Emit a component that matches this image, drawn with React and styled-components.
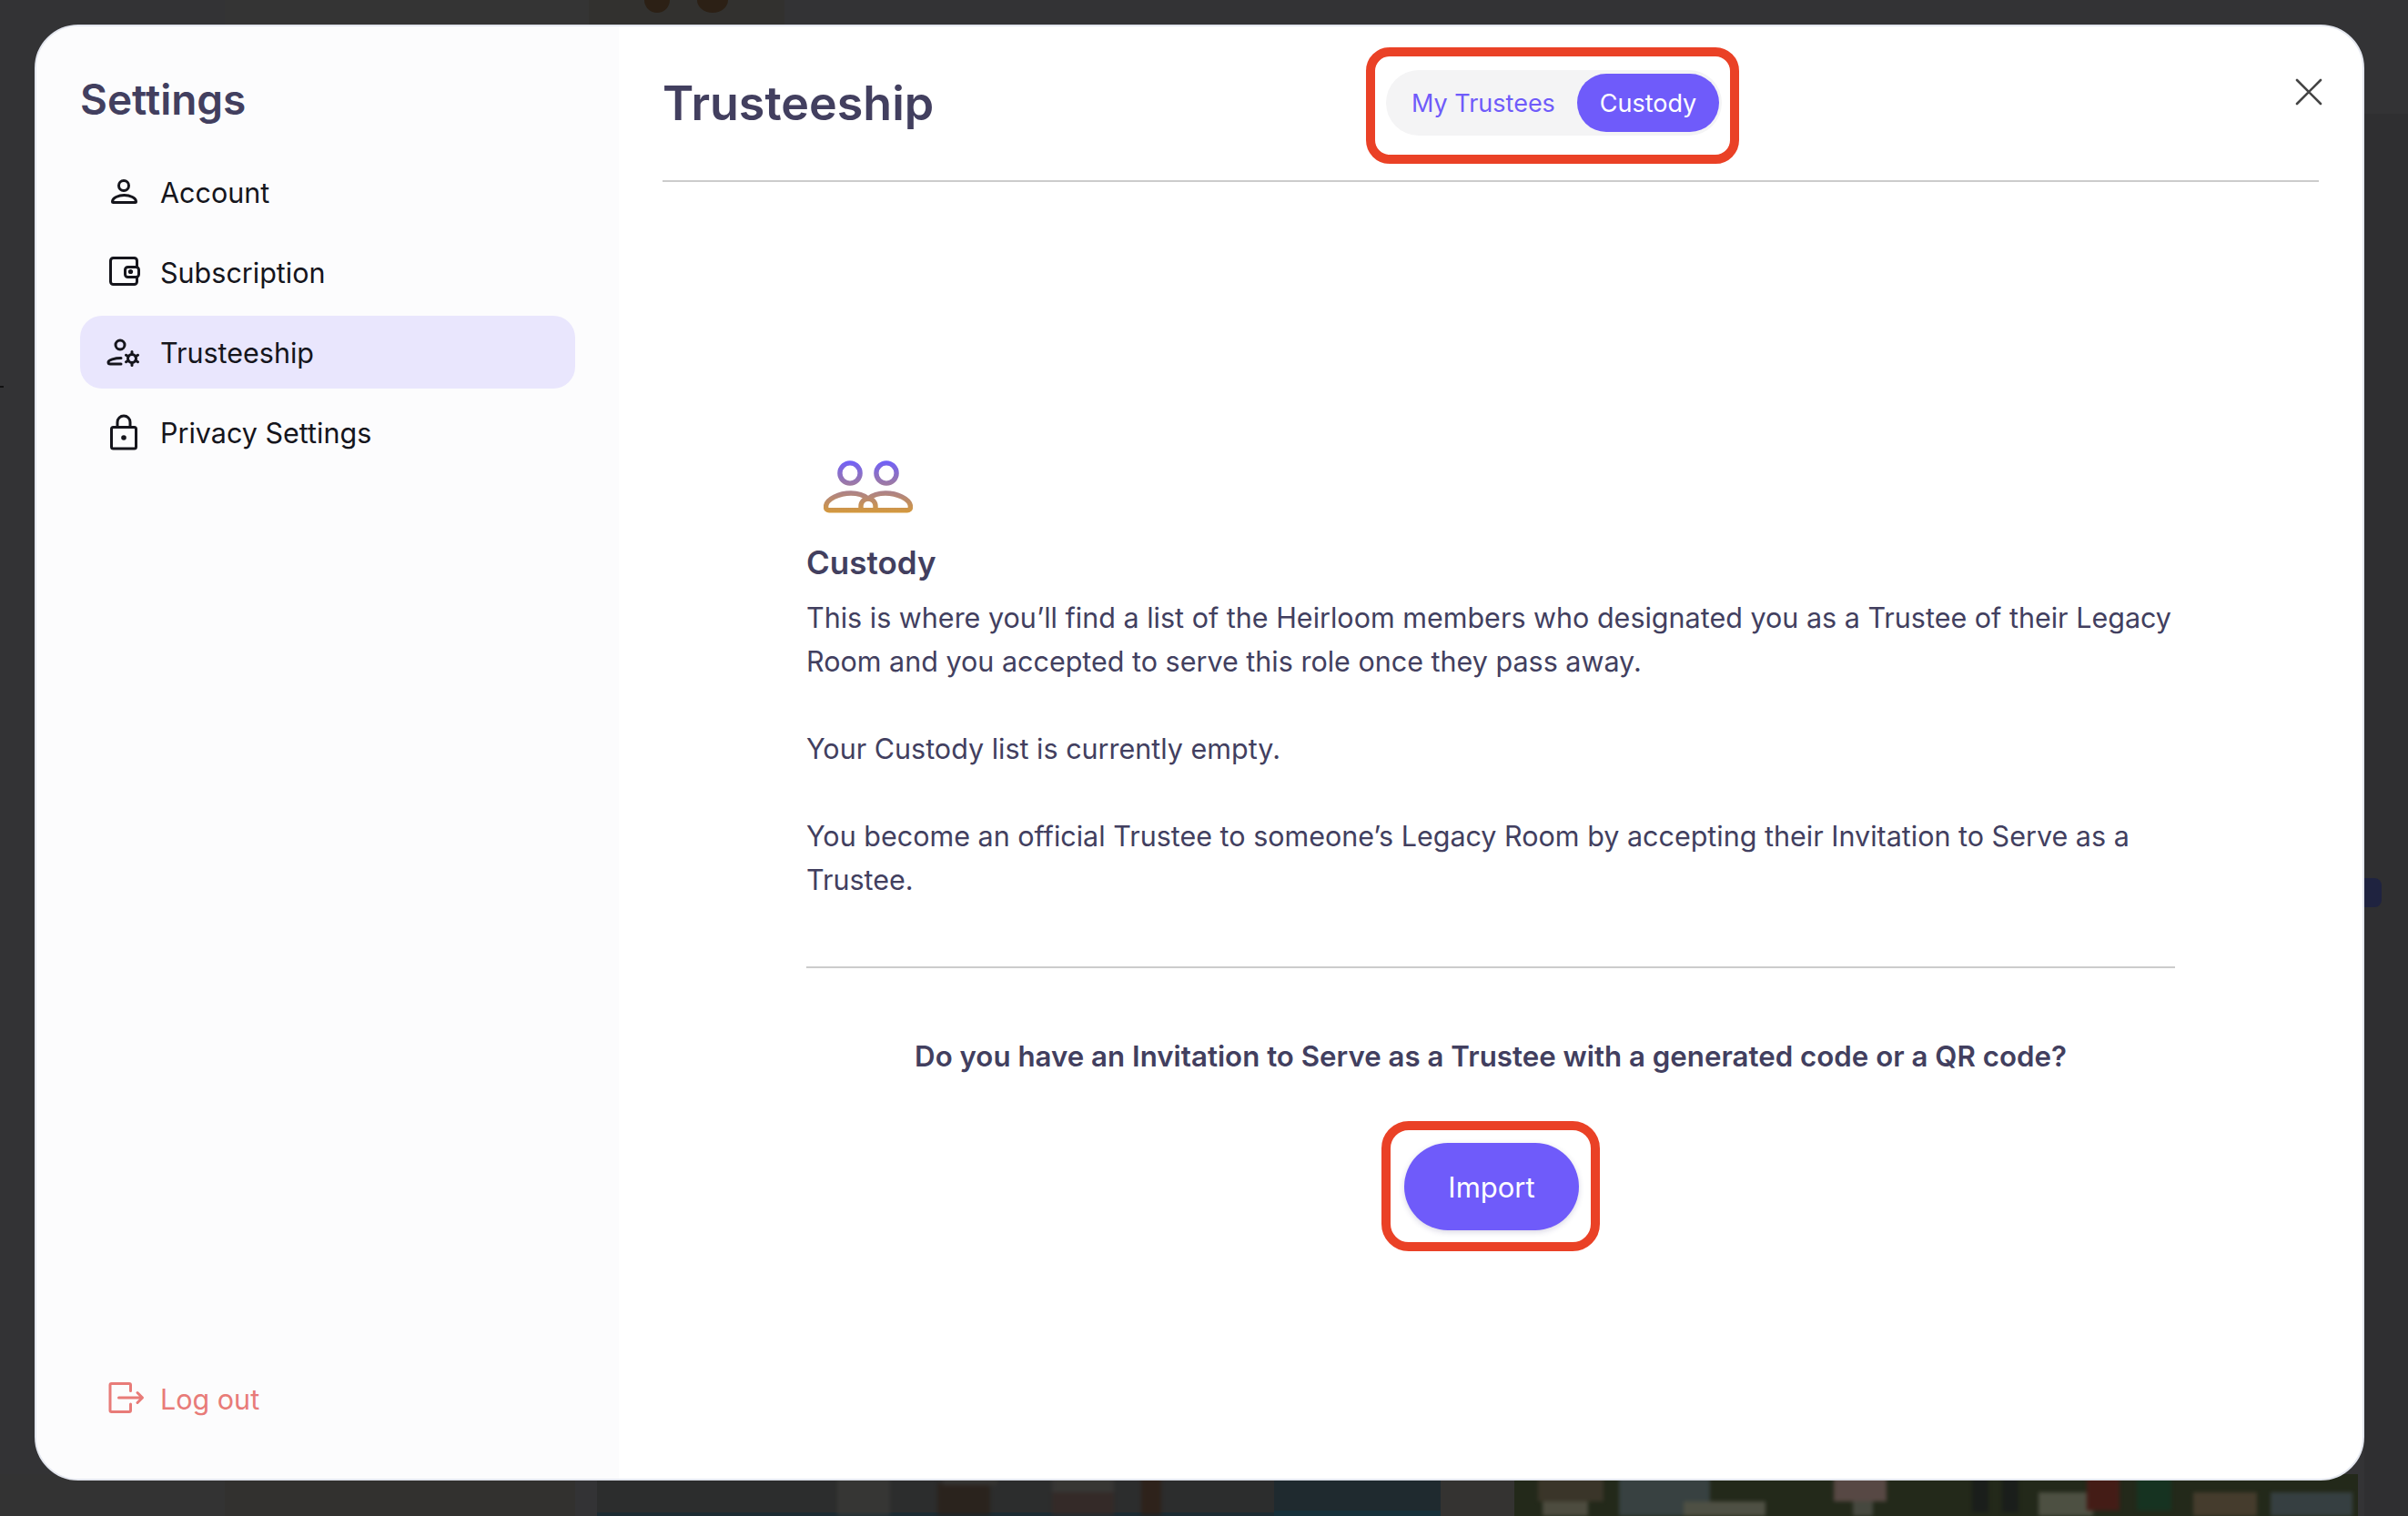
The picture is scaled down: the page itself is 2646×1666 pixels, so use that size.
import React from "react";
import styled, { createGlobalStyle } from "styled-components";

const GlobalStyle = createGlobalStyle`
  html, body {
    margin: 0;
    padding: 0;
    background: #333335;
    overflow: hidden;
  }
  * {
    box-sizing: border-box;
  }
`;

const navItems = [
  { label: "Account", icon: <AccountIcon /> },
  { label: "Subscription", icon: <WalletIcon /> },
  { label: "Trusteeship", icon: <TrusteeIcon />, active: true },
  { label: "Privacy Settings", icon: <LockIcon /> },
];

function AccountIcon() {
  return (
    <Glyph viewBox="0 0 40 40">
      <circle cx="20" cy="13" r="5.5" />
      <path d="M8.5 31.5H32.5a1 1 0 0 0 1-1C33.5 26.5 27 23.5 20.5 23.5S7.5 26.5 7.5 30.5a1 1 0 0 0 1 1Z" />
    </Glyph>
  );
}

function WalletIcon() {
  return (
    <Glyph viewBox="0 0 40 40">
      <path d="M34.5 13.5V7.5a3 3 0 0 0-3-3H8.5a3 3 0 0 0-3 3v23a3 3 0 0 0 3 3h23a3 3 0 0 0 3-3V26" />
      <rect x="21.5" y="14.5" width="15" height="11" rx="3" />
      <circle cx="27.5" cy="19.5" r="2.6" fill="currentColor" stroke="none" />
    </Glyph>
  );
}

function TrusteeIcon() {
  return (
    <Glyph viewBox="0 0 40 40">
      <circle cx="16" cy="12" r="5" />
      <path d="M17 26.5C10 26.5 3 28.5 3 31 3 32 3.8 33 5.2 33H17" />
      <circle cx="29" cy="27" r="4.5" />
      <path d="M29 19.5v3M29 31.5v3M22.5 23.2l2.6 1.5M32.9 29.2l2.6 1.5M22.5 30.8l2.6-1.5M32.9 24.8l2.6-1.5" />
    </Glyph>
  );
}

function LockIcon() {
  return (
    <Glyph viewBox="0 0 40 40">
      <rect x="6.5" y="14.5" width="27" height="23.5" rx="2" />
      <path d="M13 14V9a7 7 0 0 1 14 0v5" />
      <circle cx="20" cy="26" r="2.8" fill="currentColor" stroke="none" />
    </Glyph>
  );
}

function LogoutIcon() {
  return (
    <Glyph viewBox="0 0 40 40">
      <path d="M27.5 11.5V5a1.5 1.5 0 0 0-1.5-1.5H6.5A1.5 1.5 0 0 0 5 5v28a1.5 1.5 0 0 0 1.5 1.5H26a1.5 1.5 0 0 0 1.5-1.5v-7" />
      <path d="M14.5 19H40M35 13.5l5.5 5.5-5.5 5.5" />
    </Glyph>
  );
}

function CloseIcon() {
  return (
    <svg width="30" height="30" viewBox="0 0 30 30" fill="none" stroke="#454545" strokeWidth="2.6" strokeLinecap="round">
      <path d="M2 2l26 26M28 2L2 28" />
    </svg>
  );
}

function CustodyIcon() {
  return (
    <CustodyGlyph width="98" height="58" viewBox="0 0 98 58" fill="none" strokeWidth="5.4">
      <defs>
        <linearGradient id="custodyGrad" gradientUnits="userSpaceOnUse" x1="0" y1="0" x2="0" y2="58">
          <stop offset="0" stopColor="#6f5ffb" />
          <stop offset="1" stopColor="#d69a3a" />
        </linearGradient>
      </defs>
      <g stroke="url(#custodyGrad)" strokeLinejoin="round">
        <circle cx="29" cy="14" r="11.1" />
        <circle cx="69" cy="14" r="11.1" />
        <path d="M6 54.8H92a3.5 3.5 0 0 0 3.5-3.5C95.5 42 80 36 68 36 60 36 54 38 49 42 44 38 38 36 30 36 18 36 2.5 42 2.5 51.3A3.5 3.5 0 0 0 6 54.8Z" />
        <path d="M41 54.8V50a8 8 0 0 1 16 0v4.8" />
      </g>
    </CustodyGlyph>
  );
}

// the dimmed page behind the modal, only its edges show
function BackdropPhoto() {
  return (
    <BackdropSvg viewBox="0 0 2646 1666">
      <rect x="247" y="0" width="400" height="27" fill="#343434" />
      <rect x="647" y="0" width="215" height="27" fill="#32312f" />
      <ellipse cx="722" cy="0" rx="14" ry="14" fill="#2c2015" />
      <ellipse cx="783" cy="0" rx="17" ry="14" fill="#2c2015" />
      <rect x="2598" y="125" width="48" height="1541" fill="#2f2f31" />
      <rect x="2580" y="965" width="37" height="32" rx="8" fill="#1f2340" />
      <rect x="0" y="424" width="4" height="2" fill="#111" />
      <rect x="0" y="1620" width="247" height="46" fill="#333333" />
      <rect x="247" y="1620" width="385" height="46" fill="#32312f" />
      <rect x="656" y="1620" width="927" height="46" fill="#2c2d2d" />
      <rect x="656" y="1662" width="927" height="4" fill="#1d2b32" />
      <rect x="1400" y="1620" width="183" height="46" fill="#1f2a2f" />
      <rect x="1400" y="1660" width="183" height="6" fill="#17303a" />
      <rect x="1583" y="1620" width="81" height="46" fill="#343331" />
      <rect x="1664" y="1620" width="927" height="46" fill="#23291a" />
      <Figures>
        <rect x="920" y="1620" width="58" height="46" fill="#3e3d3a" />
        <rect x="1030" y="1630" width="58" height="36" fill="#2a1d14" />
        <rect x="1036" y="1620" width="60" height="12" fill="#3c3a36" />
        <rect x="1156" y="1640" width="68" height="26" fill="#3a2925" />
        <rect x="1156" y="1620" width="68" height="20" fill="#403e3a" />
        <rect x="1254" y="1620" width="22" height="46" fill="#301c10" />
        <rect x="1690" y="1620" width="72" height="30" fill="#4a3e33" />
        <rect x="1695" y="1650" width="50" height="16" fill="#6a6458" />
        <rect x="1779" y="1620" width="100" height="46" fill="#46525c" />
        <rect x="1850" y="1650" width="90" height="16" fill="#6c6a60" />
        <rect x="2015" y="1620" width="58" height="30" fill="#7a5d60" />
        <rect x="2036" y="1650" width="22" height="16" fill="#5e5e58" />
        <rect x="2167" y="1620" width="18" height="42" fill="#15171c" />
        <rect x="2200" y="1620" width="18" height="42" fill="#15171c" />
        <rect x="2240" y="1640" width="60" height="26" fill="#6a6a5e" />
        <rect x="2293" y="1620" width="36" height="40" fill="#5a1515" />
        <rect x="2348" y="1620" width="38" height="40" fill="#0f3a26" />
        <rect x="2410" y="1640" width="70" height="26" fill="#5d4a3a" />
        <rect x="2495" y="1640" width="90" height="26" fill="#434f5c" />
      </Figures>
    </BackdropSvg>
  );
}

export default function App() {
  return (
    <>
      <GlobalStyle />
      <Page>
        <BackdropPhoto />
        <Modal>
          <Sidebar>
            <SideTitle>Settings</SideTitle>
            <Nav>
              {navItems.map((item) => (
                <NavRow key={item.label} $active={item.active}>
                  {item.icon}
                  <span>{item.label}</span>
                </NavRow>
              ))}
            </Nav>
            <LogoutRow>
              <LogoutIcon />
              <span>Log out</span>
            </LogoutRow>
          </Sidebar>
          <Main>
            <Header>
              <Title>Trusteeship</Title>
              <TabsMark>
                <Tabs>
                  <Tab>My Trustees</Tab>
                  <Tab $active>Custody</Tab>
                </Tabs>
              </TabsMark>
              <CloseButton>
                <CloseIcon />
              </CloseButton>
            </Header>
            <Content>
              <CustodyIcon />
              <SectionTitle>Custody</SectionTitle>
              <Body>
                This is where you’ll find a list of the Heirloom members who designated you as a Trustee of their Legacy
                Room and you accepted to serve this role once they pass away.
              </Body>
              <Body>Your Custody list is currently empty.</Body>
              <Body>
                You become an official Trustee to someone’s Legacy Room by accepting their Invitation to Serve as a
                Trustee.
              </Body>
              <Divider />
              <Question>Do you have an Invitation to Serve as a Trustee with a generated code or a QR code?</Question>
              <ImportMark>
                <ImportButton>Import</ImportButton>
              </ImportMark>
            </Content>
          </Main>
        </Modal>
      </Page>
    </>
  );
}

const Page = styled.div`
  position: relative;
  width: 2646px;
  height: 1666px;
  padding: 27px 48px 39px 38px;
  background: #333335;
  font-family: Inter, "Liberation Sans", sans-serif;
`;
const BackdropSvg = styled.svg`
  position: absolute;
  inset: 0;
  width: 2646px;
  height: 1666px;
`;
const Figures = styled.g`
  opacity: 0.6;
  filter: blur(2px);
`;
const Modal = styled.div`
  position: relative;
  display: flex;
  width: 2560px;
  height: 1600px;
  border: 2px solid #e4e7ef;
  border-radius: 48px;
  background: #ffffff;
  overflow: hidden;
`;
const Sidebar = styled.aside`
  display: flex;
  flex-direction: column;
  flex: 0 0 640px;
  padding: 48px;
  background: #fcfcfd;
`;
const SideTitle = styled.h2`
  margin: 0;
  font-size: 46px;
  line-height: 64px;
  font-weight: 600;
  color: #423f5f;
`;
const Nav = styled.nav`
  display: flex;
  flex-direction: column;
  gap: 8px;
  margin-top: 30px;
`;
const NavRow = styled.div`
  display: flex;
  align-items: center;
  gap: 20px;
  height: 80px;
  padding-left: 28px;
  border-radius: 24px;
  font-size: 30.5px;
  color: #15151c;
  background: ${(p) => (p.$active ? "#e9e6fd" : "transparent")};
`;
const LogoutRow = styled(NavRow)`
  margin-top: auto;
  color: #e87b78;
`;
const Glyph = styled.svg`
  flex: 0 0 40px;
  width: 40px;
  height: 40px;
  overflow: visible;
  fill: none;
  stroke: currentColor;
  stroke-width: 3;
  stroke-linecap: round;
  stroke-linejoin: round;
`;
const Main = styled.main`
  flex: 1;
  display: flex;
  flex-direction: column;
  padding: 0 48px;
`;
const Header = styled.header`
  display: flex;
  align-items: flex-start;
  flex: 0 0 171px;
  padding-top: 23px;
  border-bottom: 2px solid #cccccc;
`;
const Title = styled.h1`
  flex: 0 0 773px;
  margin: 26px 0 0;
  font-size: 52px;
  line-height: 72px;
  font-weight: 600;
  color: #423f5f;
`;
const TabsMark = styled.div`
  width: 410px;
  height: 128px;
  padding: 15px 12px;
  border: 10px solid #ea4126;
  border-radius: 26px;
`;
const Tabs = styled.div`
  display: flex;
  align-items: center;
  justify-content: space-between;
  width: 369px;
  height: 72px;
  padding: 0 3px 0 28px;
  border-radius: 36px;
  background: #f4f4f5;
`;
const Tab = styled.div`
  display: flex;
  align-items: center;
  justify-content: center;
  height: 64px;
  font-size: 27px;
  color: ${(p) => (p.$active ? "#ffffff" : "#6f5bfa")};
  ${(p) => p.$active && "width: 156px; border-radius: 32px; background: #6f5bfa;"}
`;
const CloseButton = styled.div`
  position: absolute;
  top: 57px;
  right: 44px;
  width: 30px;
  height: 30px;
  line-height: 0;
`;
const Content = styled.section`
  display: flex;
  flex-direction: column;
  width: 1504px;
  margin-left: 158px;
  padding-top: 306px;
`;
const CustodyGlyph = styled.svg`
  margin-left: 19px;
  flex: none;
`;
const SectionTitle = styled.h3`
  margin: 30px 0 13px;
  font-size: 35px;
  line-height: 48px;
  font-weight: 600;
  color: #423f5f;
`;
const Body = styled.p`
  margin: 0;
  font-size: 30.5px;
  line-height: 48px;
  color: #423f5f;
  & + & {
    margin-top: 48px;
  }
`;
const Divider = styled.hr`
  width: 100%;
  height: 2px;
  margin: 71px 0 0;
  border: 0;
  background: #cccccc;
`;
const Question = styled.p`
  margin: 73px 0 0;
  text-align: center;
  font-size: 31.25px;
  line-height: 48px;
  font-weight: 600;
  color: #423f5f;
`;
const ImportMark = styled.div`
  align-self: center;
  width: 240px;
  height: 143px;
  margin-top: 47px;
  padding: 14px 15px;
  border: 10px solid #ea4126;
  border-radius: 30px;
`;
const ImportButton = styled.div`
  display: flex;
  align-items: center;
  justify-content: center;
  width: 192px;
  height: 96px;
  border-radius: 48px;
  font-size: 31px;
  color: #ffffff;
  background: #6f5bfa;
  box-shadow: 0 2px 6px rgba(60, 50, 120, 0.2);
`;
